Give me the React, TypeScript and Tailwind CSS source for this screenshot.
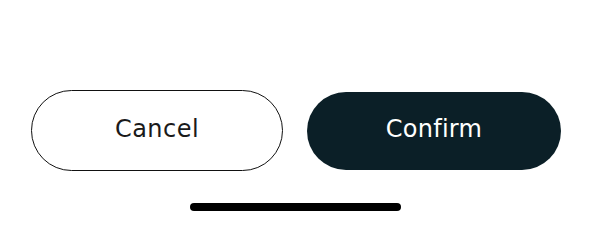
export default function App() {
  return (
    <div className="w-[591px] h-[223px] bg-white flex flex-col" style={{ fontFamily: '"DejaVu Sans", sans-serif' }}>
      {/* action buttons */}
      <div className="flex items-center gap-[24px] pl-[31px] pt-[90px]">
        <button className="w-[252px] h-[81px] pb-[4px] rounded-full border border-[#111] bg-white text-[24px] tracking-[0.02em] text-[#1a1a1a]">
          Cancel
        </button>
        <button className="w-[254px] h-[78px] pb-[3px] rounded-full bg-[#0b1f27] text-[24px] tracking-[0.01em] text-white">
          Confirm
        </button>
      </div>
      {/* home indicator */}
      <div className="flex justify-center pt-[32px]">
        <div className="w-[211px] h-[8px] rounded-full bg-black"></div>
      </div>
    </div>
  );
}
